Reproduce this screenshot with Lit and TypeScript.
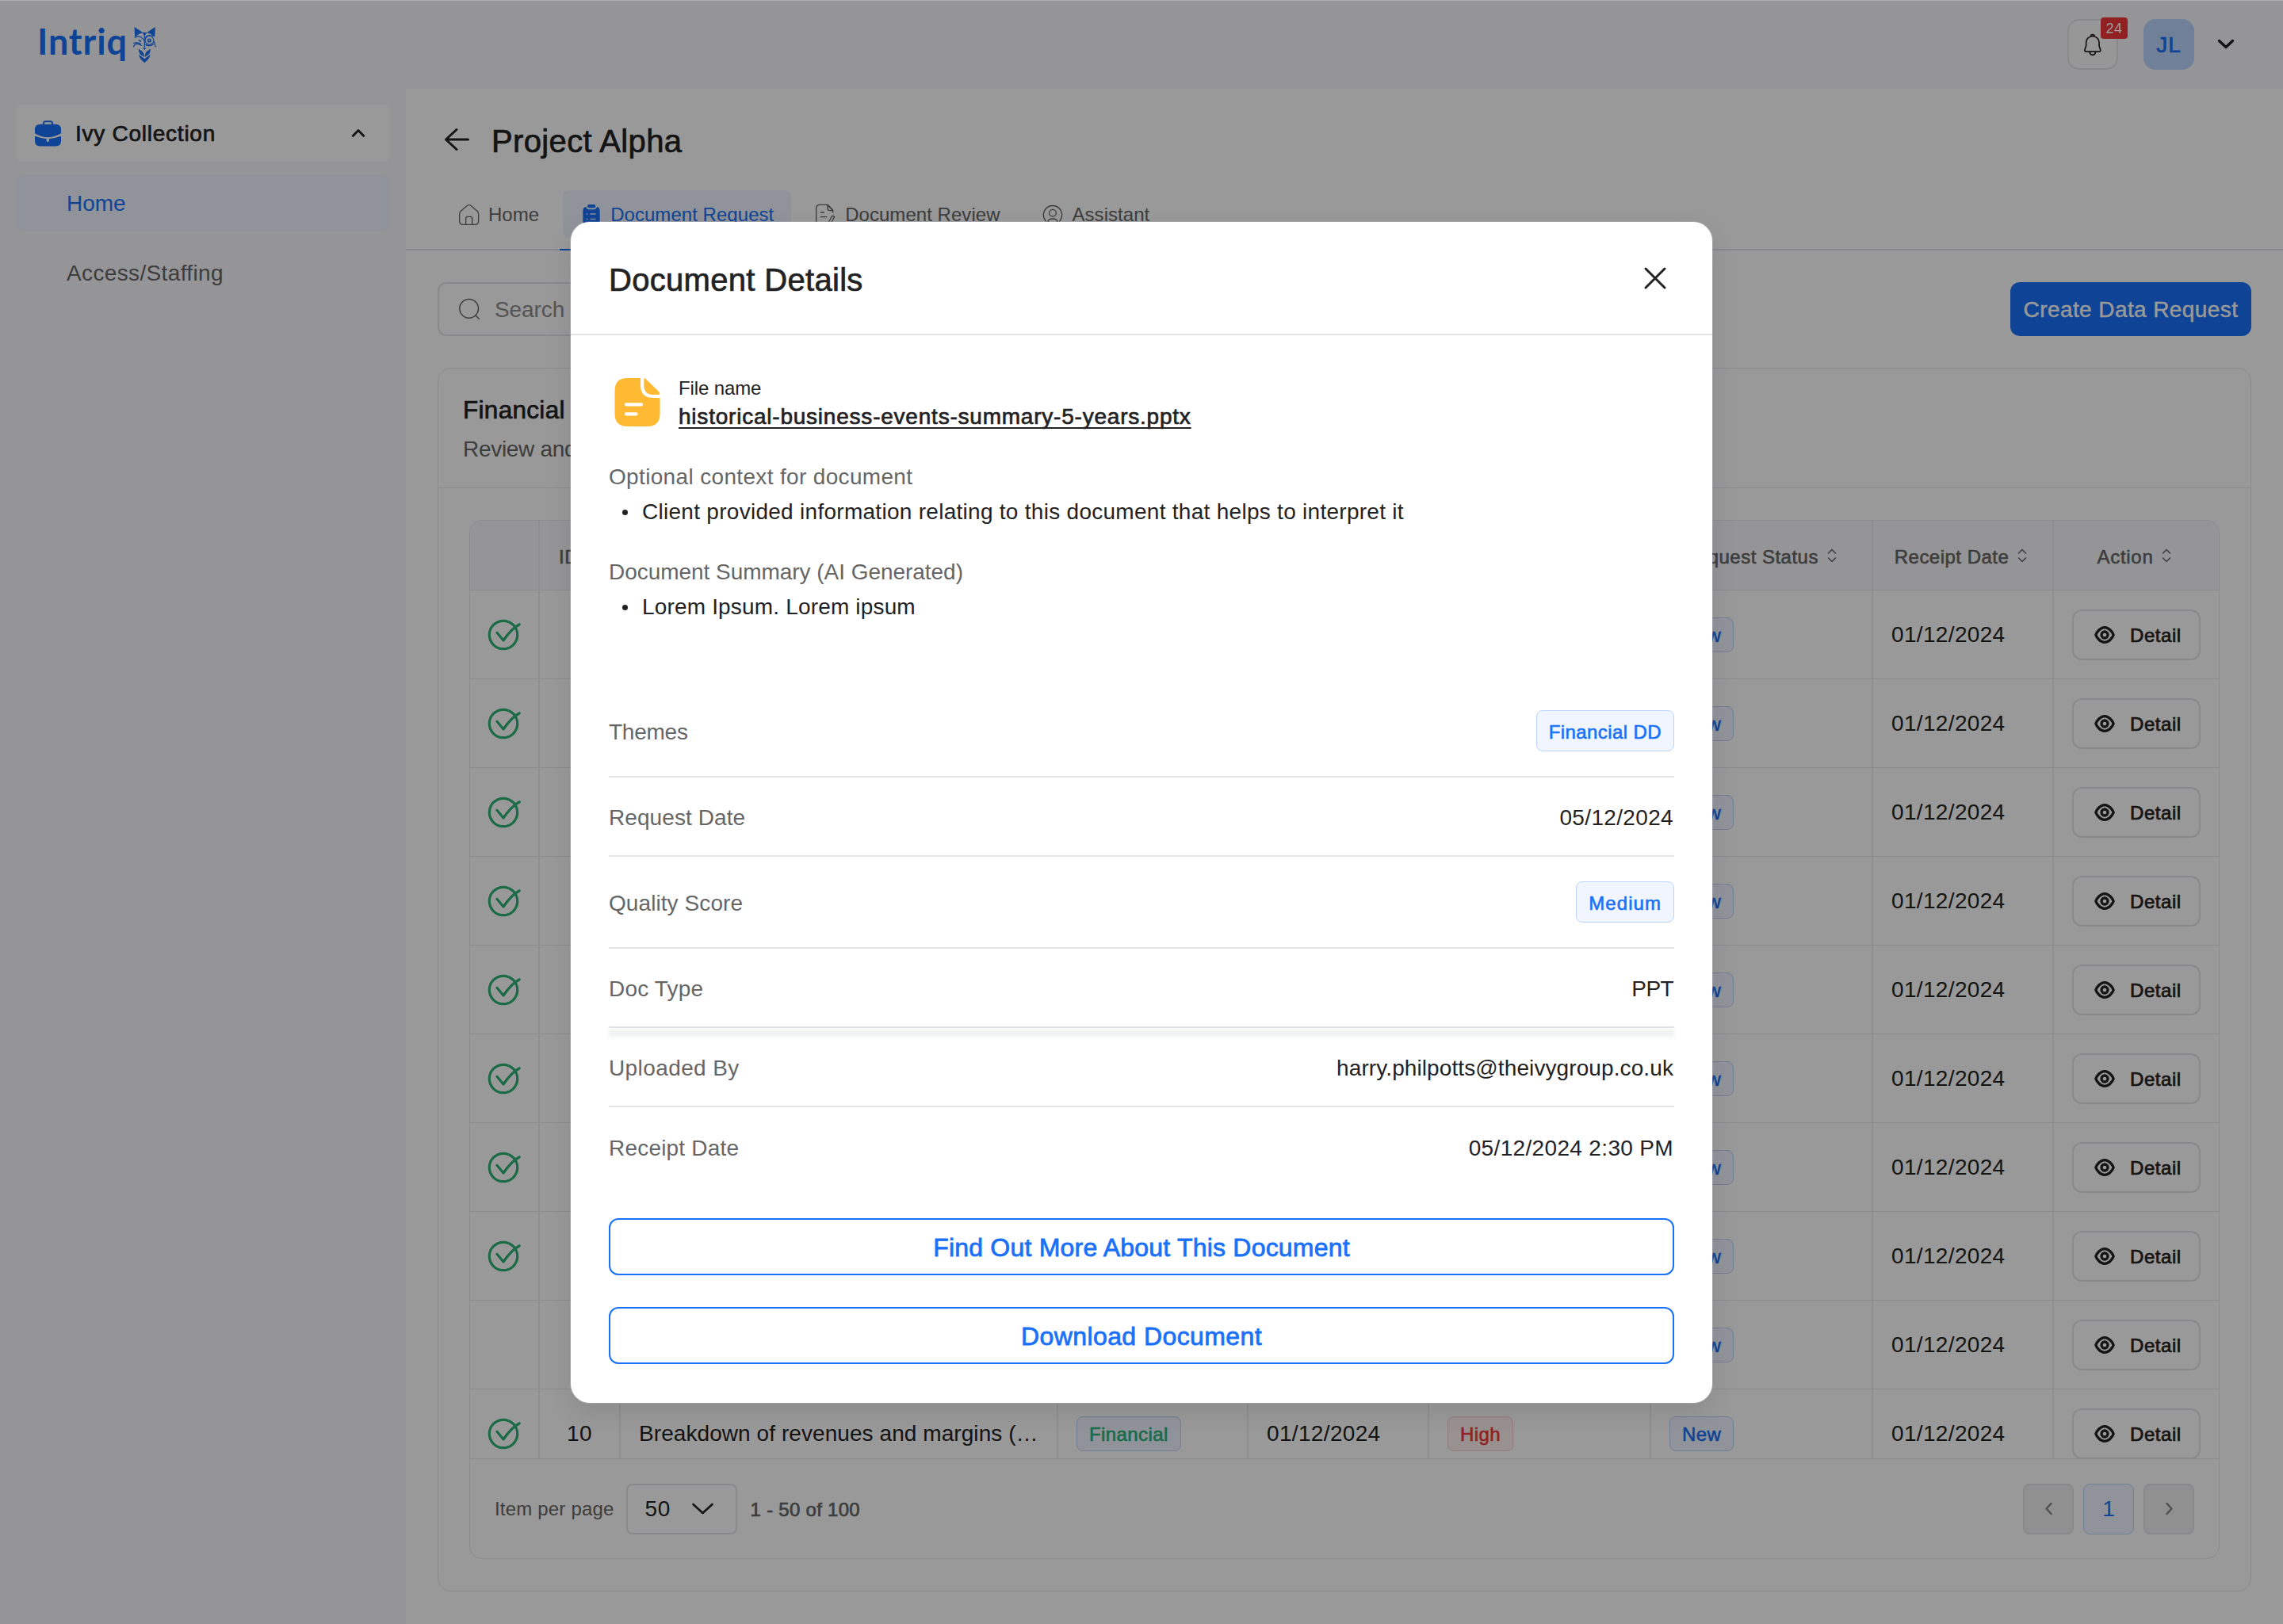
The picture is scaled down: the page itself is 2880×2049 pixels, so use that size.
import { LitElement, html, css } from "lit";
import { customElement } from "lit/decorators.js";
import { classMap } from "lit/directives/class-map.js";

interface RequestRow {
  done: boolean; id?: number; title?: string; theme?: string;
  requested?: string; priority?: string; status: string; received: string;
}

const base = { status: "New", received: "01/12/2024" };
const rows: RequestRow[] = Array.from({ length: 9 }, (_, i) => ({ ...base, done: i !== 8 }));
const lastRow: RequestRow = {
  ...base, done: true, id: 10, title: "Breakdown of revenues and margins (…",
  theme: "Financial", requested: "01/12/2024", priority: "High",
};

const sortIcon = html`<svg class="sort" viewBox="0 0 20 20"><path d="M5.500 7 10 2.500 14.500 7M5.500 13l4.500 4.500 4.500-4.500"/></svg>`;
const checkIcon = html`<svg class="check" viewBox="0 0 44 44"><circle cx="21" cy="22" r="17.700"/><path d="M13 19.300l8 9.700C27 20.500 34 12.500 41.300 8.800"/></svg>`;
const eyeIcon = html`<svg class="eye" viewBox="-13 -12 26 24"><path d="M-11.200 0C-10 -3.500 -5.500 -9.300 0 -9.300S10 -3.500 11.200 0C10 3.500 5.500 9.300 0 9.300S-10 3.500 -11.200 0Z"/><circle r="4"/></svg>`;

@customElement("app-root")
export class AppRoot extends LitElement {
  static styles = css`
    :host {
      display: block; position: relative; width: 2880px; height: 2049px; overflow: hidden;
      font-family: "Liberation Sans", Arial, sans-serif; font-size: 28px; color: #222224;
      background: #f8f9fc; --blue: #1a71f8; --red: #f2363a; --green: #2cb275; --line: #e6e8ec; --muted: #666;
    }
    * { box-sizing: border-box; }
    svg { display: block; flex: none; fill: none; stroke: currentColor; stroke-linecap: round; stroke-linejoin: round; overflow: visible; }
    .medium { -webkit-text-stroke: 0.7px currentColor; }
    .page { display: flex; flex-direction: column; height: 2049px; }

    .topbar { height: 112px; flex: none; display: flex; align-items: center; padding: 0 62px 0 47px; }
    .brand { display: flex; align-items: center; gap: 8px; color: var(--blue); flex: 1; height: 64px; }
    .wordmark { font: 700 45px/52px Lato, sans-serif; width: 113px; letter-spacing: .9px; white-space: nowrap; padding-bottom: 8px; }
    .fox { width: 29px; height: 45px; fill: currentColor; stroke: none; }
    .bell { width: 64px; height: 64px; border: 2px solid #e3e5e9; border-radius: 15px; background: #fcfcfd; display: flex; align-items: center; justify-content: center; position: relative; }
    .bell svg { width: 22px; height: 27px; stroke-width: 5; }
    .count { position: absolute; left: 40px; top: -4px; width: 34px; height: 27px; border-radius: 4px; background: var(--red); color: #fff; font-size: 18px; line-height: 28px; text-align: center; letter-spacing: .5px; }
    .avatar { width: 64px; height: 64px; margin-left: 32px; border-radius: 15px; background: #bbd5ff; color: var(--blue); display: flex; align-items: center; justify-content: center; letter-spacing: 1px; padding-top: 2px; }
    .caret { width: 20px; height: 12px; margin-left: 30px; stroke-width: 3.400; }

    .frame { flex: 1; display: flex; min-height: 0; }
    .sidebar { width: 512px; padding: 20px; display: flex; flex-direction: column; gap: 16px; }
    .nav { height: 72px; border-radius: 8px; display: flex; align-items: center; padding: 2px 32px 0 64px; }
    .nav.group { background: #fff; padding: 0 32px 0 24px; }
    .nav.group .label { flex: 1; margin-left: 18px; letter-spacing: .75px; padding-top: 2px; }
    .nav.group .chev { width: 16px; height: 10px; stroke-width: 2.800; }
    .case { width: 33px; height: 33px; color: var(--blue); fill: currentColor; stroke: none; }
    .nav.active { background: #f0f5ff; color: var(--blue); }
    .nav.plain { color: var(--muted); letter-spacing: .36px; }

    .main { flex: 1; background: #fff; display: flex; flex-direction: column; }
    .heading { height: 128px; display: flex; align-items: center; padding: 4px 0 0 49px; font-size: 40px; letter-spacing: .36px; }
    .heading svg { width: 30px; height: 28px; stroke-width: 3; margin: 0 29px 4px 0; }
    .tabs { height: 76px; border-bottom: 2px solid #e3e5e9; display: flex; padding-left: 66px; font-size: 24px; color: var(--muted); }
    .tab { height: 60px; display: flex; align-items: center; gap: 12px; position: relative; padding-top: 1px; letter-spacing: .04px; }
    .tab svg { width: 26px; height: 28px; }
    .tab.sel { margin: 0 30px; width: 288px; padding-left: 23px; gap: 11px; background: #f0f5ff; border-radius: 8px; color: var(--blue); }
    .tab.sel::after { content: ""; position: absolute; left: -4px; right: -4px; bottom: -16px; height: 2px; background: var(--blue); }
    .tab.last { margin-left: 53px; }
    .stroke { stroke-width: 4; }

    .content { padding: 40px; display: flex; flex-direction: column; gap: 40px; }
    .toolbar { display: flex; justify-content: space-between; height: 68px; }
    .search { width: 640px; border: 2px solid #e3e5e9; border-radius: 11px; display: flex; align-items: center; padding: 0 0 0 25px; gap: 19px; color: #8c8c8c; letter-spacing: -.09px; }
    .search span { padding-top: 2px; }
    .search svg { width: 26px; height: 26px; stroke-width: 4.500; color: var(--muted); }
    .primary { width: 304px; border-radius: 12px; background: var(--blue); color: #fff; display: flex; align-items: center; justify-content: center; letter-spacing: .41px; padding-top: 2px; -webkit-text-stroke: .4px #fff; }

    .card { height: 1544px; border: 1px solid var(--line); border-radius: 18px; }
    .card-head { height: 151px; border-bottom: 1px solid var(--line); padding: 32px 31px 0; display: flex; flex-direction: column; gap: 10px; line-height: 40px; }
    .card-title { font-size: 31.500px; letter-spacing: .3px; }
    .card-sub { color: var(--muted); letter-spacing: -.3px; }
    .table { margin: 40px 39px 0; height: 1311px; border: 1px solid var(--line); border-radius: 16px; overflow: hidden; }
    .row { display: grid; grid-template-columns: 88px 102px 552px 240px 228px 280px 280px 228px 208px; height: 112px; border-bottom: 1px solid var(--line); }
    .cell { border-right: 2px solid #ebedf1; display: flex; align-items: center; padding: 0 23px; white-space: nowrap; min-width: 0; }
    .cell:last-child { border-right: 0; justify-content: center; padding: 0; }
    .cell.mid { justify-content: center; padding: 0; }
    .row.head { height: 88px; background: #f8f9fc; font-size: 24px; color: var(--muted); letter-spacing: .48px; }
    .head .cell { justify-content: center; padding: 0 1px 0 0; gap: 7px; }
    .head .cell.first { justify-content: flex-start; padding-left: 24px; }
    .head .cell.status { padding: 0; }
    .head .t { padding-top: 4px; -webkit-text-stroke: .6px currentColor; }
    .head .cell:last-child { letter-spacing: .7px; }
    .clip { height: 88px; overflow: hidden; border-bottom: 1px solid var(--line); }
    .sort { width: 20px; height: 20px; stroke-width: 1.600; }
    .check { width: 44px; height: 44px; color: var(--green); stroke-width: 3.200; }
    .date { letter-spacing: .34px; }
    .title { letter-spacing: .07px; }
    .tag { height: 44px; border: 1px solid #bcd4fb; border-radius: 8px; background: #f0f5ff; color: var(--blue); padding: 3px 15px 0; font-size: 24px; display: flex; align-items: center; letter-spacing: .4px; -webkit-text-stroke: .6px currentColor; }
    .tag.green { color: var(--green); }
    .tag.red { color: var(--red); background: #fff1f1; border-color: #f7cfcf; }
    .tag.big { height: 52px; }
    .detail { width: 162px; height: 64px; border: 2px solid #e3e5e9; border-radius: 12px; background: #fff; display: flex; align-items: center; padding-left: 26px; font-size: 24px; }
    .detail .t { padding: 3px 0 0 19px; letter-spacing: .55px; }
    .eye { width: 26px; height: 24px; stroke-width: 3.300; }

    .foot { height: 125px; display: flex; align-items: center; padding: 0 31px; font-size: 24px; color: var(--muted); }
    .select { width: 140px; height: 64px; margin: 0 17px 0 15px; border: 2px solid #e3e5e9; border-radius: 8px; display: flex; align-items: center; justify-content: space-between; padding: 0 28px 0 22px; font-size: 28px; color: #222224; letter-spacing: .5px; }
    .select svg { width: 27px; height: 13px; stroke-width: 2.600; }
    .per { letter-spacing: .19px; }
    .range { letter-spacing: .28px; flex: 1; padding-top: 3px; }
    .pager { display: flex; gap: 12px; }
    .pg { width: 64px; height: 64px; border: 2px solid #e3e5e9; border-radius: 8px; background: #f0f0f1; display: flex; align-items: center; justify-content: center; color: #868686; }
    .pg svg { width: 9px; height: 15px; stroke-width: 2.500; }
    .pg.on { background: #f0f5ff; border: 1px solid #bcd4fb; color: var(--blue); font-size: 28px; }

    .overlay { position: absolute; inset: 0; background: rgba(0, 0, 0, .4); border-top: 1px solid #afb0b2; padding: 279px 720px 0; }
    .dialog { width: 1440px; height: 1490px; border-radius: 24px; background: #fff; box-shadow: 0 12px 32px rgba(0, 0, 0, .09), 0 0 2px rgba(225, 228, 240, .8); }
    .dlg-head { height: 143px; border-bottom: 2px solid #e3e4ea; display: flex; align-items: center; justify-content: space-between; padding: 5px 59px 0 48px; font-size: 40px; letter-spacing: .31px; }
    .dlg-head svg { width: 26px; height: 26px; stroke-width: 3; margin-bottom: 4px; }
    .body { padding: 48px 48px 0; display: flex; flex-direction: column; }
    .file { display: flex; gap: 16px; height: 74px; }
    .file svg { width: 72px; height: 72px; fill: #ffb932; stroke: none; }
    .fn-label { font-size: 24px; line-height: 37px; letter-spacing: -.12px; }
    .fn { line-height: 36px; letter-spacing: .78px; text-decoration: underline; text-decoration-thickness: 2px; text-underline-offset: 4px; text-decoration-skip-ink: none; }
    .ctx { margin-top: 32px; line-height: 44px; }
    .file + .ctx { margin-top: 35px; }
    .lbl { color: var(--muted); }
    .item { display: flex; align-items: center; letter-spacing: .28px; }
    .item.lorem { letter-spacing: .17px; }
    .dot { width: 7px; height: 7px; border-radius: 50%; background: currentColor; margin: 0 18px 0 17px; }
    .rows { margin-top: 77px; }
    .kv { height: 100px; display: flex; justify-content: space-between; align-items: center; border-bottom: 2px solid #e3e4ea; position: relative; }
    .kv.tall { height: 116px; }
    .kv.end { border-bottom: 0; }
    .kv > .k { padding-top: 4px; }
    .kv > .v { padding: 4px 1px 0 0; }
    .k { color: var(--muted); }
    .kv.shade::after { content: ""; position: absolute; left: 0; right: 0; top: 103px; height: 7px; background: rgba(60, 66, 80, .1); filter: blur(3px); }
    .action { height: 72px; border: 2px solid var(--blue); border-radius: 12px; color: var(--blue); font-size: 32px; display: flex; align-items: center; justify-content: center; padding-top: 3px; margin-top: 40px; -webkit-text-stroke: .8px currentColor; }
    .s0 { letter-spacing: -.04px; } .s1 { letter-spacing: .08px; } .s2 { letter-spacing: .34px; } .s3 { letter-spacing: .42px; }
    .s4 { letter-spacing: .4px; } .s5 { letter-spacing: .2px; } .s6 { letter-spacing: .1px; } .s7 { letter-spacing: 1.050px; }
    .s8 { letter-spacing: -.6px; } .s9 { letter-spacing: -.25px; } .sa { letter-spacing: .21px; }
  `;

  private kv(k: string, ks: string, v: unknown, cls = "") {
    return html`<div class="kv ${cls}"><span class="k ${ks}">${k}</span>${v}</div>`;
  }

  private tag(text: string | undefined, cls = "") {
    return text ? html`<span class="tag ${cls}">${text}</span>` : "";
  }

  private row(r: RequestRow) {
    return html`<div class="row">
      <div class="cell mid">${r.done ? checkIcon : ""}</div>
      <div class="cell mid date">${r.id}</div>
      <div class="cell title">${r.title}</div>
      <div class="cell">${this.tag(r.theme, "green")}</div>
      <div class="cell date">${r.requested}</div>
      <div class="cell">${this.tag(r.priority, "red")}</div>
      <div class="cell">${this.tag(r.status)}</div>
      <div class="cell date">${r.received}</div>
      <div class="cell"><div class="detail">${eyeIcon}<span class="t medium">Detail</span></div></div>
    </div>`;
  }

  private th(label = "", cls = "") {
    return html`<div class="cell ${cls}">${label ? html`<span class="t">${label}</span>${sortIcon}` : ""}</div>`;
  }

  private page(n: unknown, on = false) {
    return html`<div class="pg ${classMap({ on })}">${n}</div>`;
  }

  render() {
    return html`
      <div class="page">
        <header class="topbar">
          <div class="brand">
            <span class="wordmark">Intriq</span>
            <svg class="fox" viewBox="506 103 85 133">
              <path d="M510 103 542 124Q526 128 512 141ZM588 103 557 124Q572 128 586 141ZM539 124H558L548 136Z"/>
              <g fill="none" stroke="currentColor" stroke-width="3.600"><path d="M512 142Q534 132 545 152M548 134V178M507 177Q514 158 536 172M507 163Q522 160 534 166M551 143Q560 130 579 137M584 158 589 177M582 167Q570 178 552 170"/><circle cx="566" cy="153" r="16"/></g>
              <circle cx="566" cy="153" r="5" fill="none" stroke="currentColor" stroke-width="5"/>
              <path d="M523 150Q532 150 536 155L532 160ZM541 181H555L548 189Z"/>
              <path d="M526 184 542 197Q547 203 547 215L531 204Q525 196 526 184ZM570 184 554 197Q549 203 549 215L565 204Q571 196 570 184ZM527 206 548 222 569 206Q569 220 548 237Q527 220 527 206Z"/>
            </svg>
          </div>
          <div class="bell">
            <svg viewBox="389 129 63 79"><path d="M420 137C405 137 396 148 396 160V170C396 178 391 182 391 188Q391 194 398 194H442Q449 194 449 188C449 182 444 178 444 170V160C444 148 435 137 420 137ZM413 137Q414 131 420 131Q426 131 427 137M409 196Q412 206 420 206Q428 206 431 196"/></svg>
            <span class="count">24</span>
          </div>
          <div class="avatar medium">JL</div>
          <svg class="caret" viewBox="0 0 20 12"><path d="M1.500 1.500 10 9.500 18.500 1.500"/></svg>
        </header>
        <div class="frame">
          <nav class="sidebar">
            <div class="nav group">
              <svg class="case" viewBox="132 456 99 98"><path d="M152 470H211Q231 470 231 490V504Q205 519 181 519Q157 519 132 504V490Q132 470 152 470Z"/><path d="M132 515Q155 523 176 525V533Q181 541 186 533V525Q208 523 231 515V532Q231 553 211 553H152Q132 553 132 532Z"/><path d="M165 471V466Q165 459 172 459H191Q198 459 198 466V471" fill="none" stroke="currentColor" stroke-width="6"/></svg>
              <span class="label medium">Ivy Collection</span>
              <svg class="chev" viewBox="0 0 16 10"><path d="M1.200 8.500 8 1.500 14.800 8.500"/></svg>
            </div>
            <div class="nav active">Home</div>
            <div class="nav plain">Access/Staffing</div>
          </nav>
          <main class="main">
            <div class="heading">
              <svg viewBox="0 0 30 28"><path d="M15 1.500 1.500 14 15 26.500M1.500 14H29.500"/></svg>
              <span class="medium">Project Alpha</span>
            </div>
            <div class="tabs">
              <div class="tab"><svg class="stroke" viewBox="55 319 78 84"><path d="M60 359Q60 350 67 345L87 328Q96 320 105 328L125 345Q132 350 132 359V384Q132 398 118 398H74Q60 398 60 384ZM84 398V375Q84 368 91 368H101Q108 368 108 375V398"/></svg><span>Home</span></div>
              <div class="tab sel"><svg viewBox="519 319 78 84" stroke="none"><rect x="543" y="322" width="31" height="13" rx="6" fill="currentColor" stroke="none"/><path d="M538 331Q541 341 550 341H567Q576 341 579 331Q590 333 590 346V386Q590 400 576 400H540Q526 400 526 386V346Q526 333 538 331Z" fill="currentColor" stroke="none"/><path d="M541 358H543M555 358H573M541 377H543M555 377H573" stroke="#f0f5ff" stroke-width="4"/></svg><span>Document Request</span></div>
              <div class="tab"><svg class="stroke" viewBox="56 79 78 84"><path d="M90 158H75Q61 158 61 144V97Q61 83 75 83H104L124 103V112M104 84V97Q104 105 112 105H124ZM78 112H90M78 129H100M107 151 120 127Q126 123 130 129L118 151 107 158Z"/></svg><span>Document Review</span></div>
              <div class="tab last"><svg class="stroke" viewBox="912 80 78 84"><path d="M925 146A35 35 0 1 1 977 146"/><circle cx="951" cy="115" r="13"/><path d="M932 152Q933 137 951 137Q969 137 970 152"/></svg><span>Assistant</span></div>
            </div>
            <div class="content">
              <div class="toolbar">
                <div class="search"><svg viewBox="57 681 78 78"><circle cx="95" cy="718" r="35.500"/><path d="M119 743 133 757"/></svg><span>Search</span></div>
                <div class="primary">Create Data Request</div>
              </div>
              <section class="card">
                <div class="card-head">
                  <div class="card-title medium">Financial</div>
                  <div class="card-sub">Review and</div>
                </div>
                <div class="table">
                  <div class="row head">
                    ${this.th()}${this.th("ID", "first")}${this.th()}${this.th()}${this.th()}${this.th()}
                    ${this.th("Request Status", "status")}${this.th("Receipt Date")}${this.th("Action")}
                  </div>
                  ${rows.map((r) => this.row(r))}
                  <div class="clip">${this.row(lastRow)}</div>
                  <div class="foot">
                    <span class="per">Item per page</span>
                    <div class="select">50<svg viewBox="0 0 27 13"><path d="M1.500 1 13.500 12 25.500 1"/></svg></div>
                    <span class="range medium">1 - 50 of 100</span>
                    <div class="pager">
                      ${this.page(html`<svg viewBox="0 0 9 15"><path d="M7.500 1 1.500 7.500 7.500 14"/></svg>`)}
                      ${this.page("1", true)}
                      ${this.page(html`<svg viewBox="0 0 9 15"><path d="M1.500 1 7.500 7.500 1.500 14"/></svg>`)}
                    </div>
                  </div>
                </div>
              </section>
            </div>
          </main>
        </div>
      </div>
      <div class="overlay">
        <div class="dialog">
          <div class="dlg-head"><span class="medium">Document Details</span><svg viewBox="0 0 26 26"><path d="M1 1 25 25M25 1 1 25"/></svg></div>
          <div class="body">
            <div class="file">
              <svg viewBox="0 0 72 72"><path d="M23.500 6H40V15Q40 31 56 31H64.500V51Q64.500 67 48.500 67H23.500Q7.500 67 7.500 51V22Q7.500 6 23.500 6Z"/><path d="M44.400 7Q44.400 5.600 46 6.500L63.500 23.500Q65.500 27 62 27H56Q44.400 27 44.400 15Z"/><path d="M22 39.300H41M22 51.300H34.500" stroke="#fff" stroke-width="4.200"/></svg>
              <div><div class="fn-label">File name</div><div class="fn medium">historical-business-events-summary-5-years.pptx</div></div>
            </div>
            <div class="ctx"><div class="lbl s2">Optional context for document</div>
              <div class="item"><span class="dot"></span>Client provided information relating to this document that helps to interpret it</div></div>
            <div class="ctx"><div class="lbl s0">Document Summary (AI Generated)</div>
              <div class="item lorem"><span class="dot"></span>Lorem Ipsum. Lorem ipsum</div></div>
            <div class="rows">
              ${this.kv("Themes", "s9", html`<span class="tag big">Financial DD</span>`, "tall")}
              ${this.kv("Request Date", "s1", html`<span class="v s2">05/12/2024</span>`)}
              ${this.kv("Quality Score", "s1", html`<span class="tag big s7">Medium</span>`, "tall")}
              ${this.kv("Doc Type", "s5", html`<span class="v s8">PPT</span>`, "shade")}
              ${this.kv("Uploaded By", "s4", html`<span class="v s6">harry.philpotts@theivygroup.co.uk</span>`)}
              ${this.kv("Receipt Date", "s5", html`<span class="v s2">05/12/2024 2:30 PM</span>`, "end")}
            </div>
            <div class="action sa">Find Out More About This Document</div>
            <div class="action s3">Download Document</div>
          </div>
        </div>
      </div>
    `;
  }
}
